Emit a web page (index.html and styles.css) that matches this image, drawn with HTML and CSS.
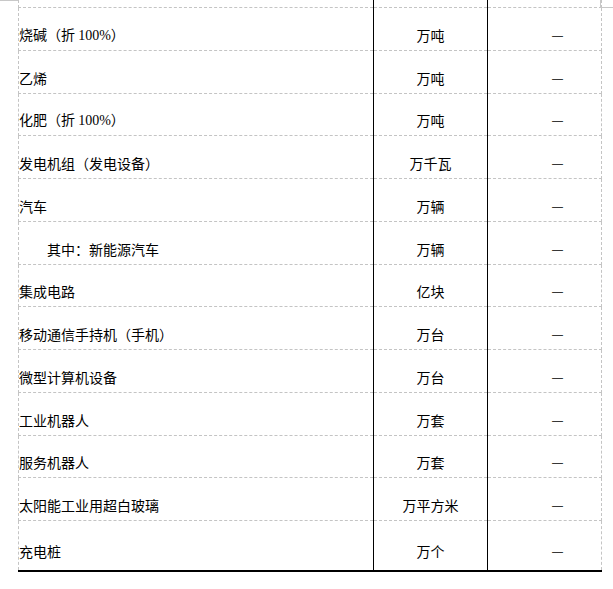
FILE: index.html
```html
<!DOCTYPE html>
<html lang="zh-CN">
<head>
<meta charset="utf-8">
<title>主要工业产品产量</title>
<link rel="stylesheet" href="styles.css">
</head>
<body>
<div class="page">
  <span class="mark mark-tl"></span>
  <span class="mark mark-tr-h"></span>
  <span class="mark mark-tr-v"></span>
  <table class="grid">
    <colgroup>
      <col class="c-name">
      <col class="c-unit">
      <col class="c-val">
    </colgroup>
    <tbody>
      <tr class="stub"><td></td><td></td><td></td></tr>
      <tr class="r43"><td class="name">烧碱（折 <span class="num">100%</span>）</td><td class="unit">万吨</td><td class="val">—</td></tr>
      <tr class="r43"><td class="name">乙烯</td><td class="unit">万吨</td><td class="val">—</td></tr>
      <tr class="r43"><td class="name">化肥（折 <span class="num">100%</span>）</td><td class="unit">万吨</td><td class="val">—</td></tr>
      <tr class="r43"><td class="name">发电机组（发电设备）</td><td class="unit">万千瓦</td><td class="val">—</td></tr>
      <tr class="r43"><td class="name">汽车</td><td class="unit">万辆</td><td class="val">—</td></tr>
      <tr class="r43"><td class="name indent">其中：新能源汽车</td><td class="unit">万辆</td><td class="val">—</td></tr>
      <tr class="r43"><td class="name">集成电路</td><td class="unit">亿块</td><td class="val">—</td></tr>
      <tr class="r43"><td class="name">移动通信手持机（手机）</td><td class="unit">万台</td><td class="val">—</td></tr>
      <tr class="r43"><td class="name">微型计算机设备</td><td class="unit">万台</td><td class="val">—</td></tr>
      <tr class="r43"><td class="name">工业机器人</td><td class="unit">万套</td><td class="val">—</td></tr>
      <tr class="r43"><td class="name">服务机器人</td><td class="unit">万套</td><td class="val">—</td></tr>
      <tr class="r43"><td class="name">太阳能工业用超白玻璃</td><td class="unit">万平方米</td><td class="val">—</td></tr>
      <tr class="last"><td class="name">充电桩</td><td class="unit">万个</td><td class="val">—</td></tr>
    </tbody>
  </table>
</div>
</body>
</html>
```

FILE: styles.css
```css
html, body {
  margin: 0;
  padding: 0;
  background: #ffffff;
}

.page {
  position: relative;
  width: 613px;
  height: 589px;
  overflow: hidden;
}

.mark {
  position: absolute;
  background: #c8c8c8;
}
.mark-tl { left: 0; top: 0; width: 18px; height: 1px; }
.mark-tr-h { left: 601px; top: 7px; width: 12px; height: 1px; }
.mark-tr-v { left: 600px; top: 0; width: 1px; height: 8px; }

.grid {
  margin-left: 18px;
  border-collapse: collapse;
  table-layout: fixed;
  width: 583px;
  font-family: "Noto Sans CJK SC", sans-serif;
  font-size: 14px;
  line-height: 16px;
  color: #000;
}

.c-name { width: 355px; }
.c-unit { width: 114px; }
.c-val { width: 114px; }

.grid td {
  padding: 12px 0 0 0;
  vertical-align: middle;
  border-top: 1px dashed #c4c4c4;
  border-bottom: 1px dashed #c4c4c4;
  border-left: 1px solid #000;
  border-right: 1px solid #000;
  white-space: nowrap;
}
.grid td:first-child { border-left: 1px dashed #c4c4c4; }
.grid td:last-child { border-right: 1px dashed #c4c4c4; }

.grid .stub td {
  height: 7px;
  padding: 0;
  border-top: none;
}

.grid .r43 td { height: 29.75px; }
.grid .last td {
  height: 36.5px;
  border-bottom: 2px solid #000;
}

.name {
  text-align: left;
}
.name.indent { padding-left: 28px; }

.num {
  font-family: "Liberation Serif", serif;
}

.unit {
  text-align: center;
}

.val {
  text-align: left;
  padding-left: 64px !important;
  font-family: "Liberation Sans", sans-serif;
  font-size: 11px;
}
```
